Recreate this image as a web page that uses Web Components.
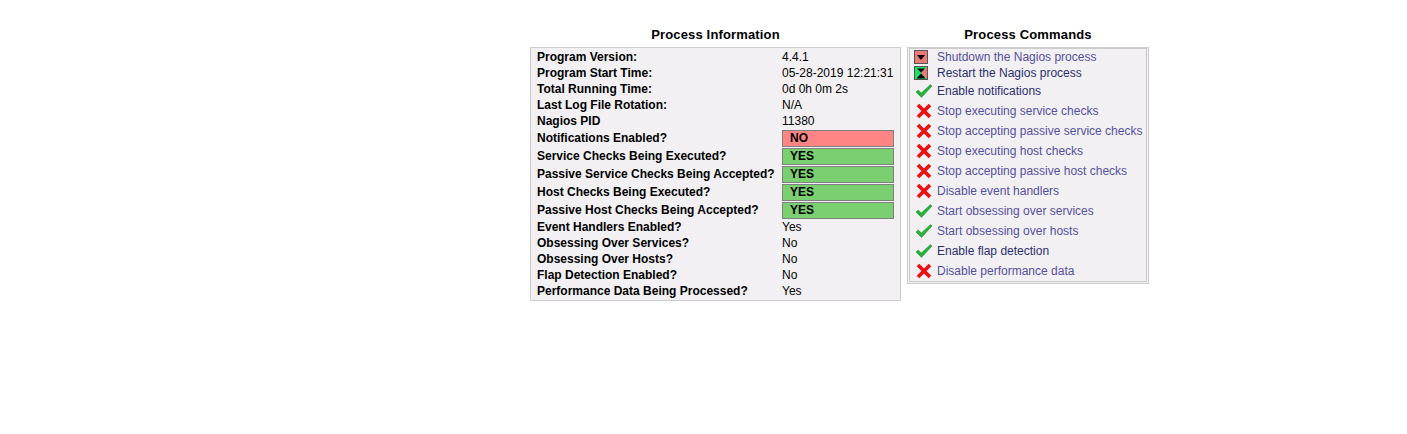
<!DOCTYPE html>
<html>
<head>
<meta charset="utf-8">
<style>
html, body { margin: 0; background: #fff; }
body { padding: 8px; font-family: "Liberation Sans", Arial, sans-serif; }
</style>
</head>
<body>
<process-page>
  <process-panel title="Process Information" style="--panel-w: 371px">
    <info-row label="Program Version:">4.4.1</info-row>
    <info-row label="Program Start Time:">05-28-2019 12:21:31</info-row>
    <info-row label="Total Running Time:">0d 0h 0m 2s</info-row>
    <info-row label="Last Log File Rotation:">N/A</info-row>
    <info-row label="Nagios PID">11380</info-row>
    <info-row label="Notifications Enabled?" state="no">NO</info-row>
    <info-row label="Service Checks Being Executed?" state="yes">YES</info-row>
    <info-row label="Passive Service Checks Being Accepted?" state="yes">YES</info-row>
    <info-row label="Host Checks Being Executed?" state="yes">YES</info-row>
    <info-row label="Passive Host Checks Being Accepted?" state="yes">YES</info-row>
    <info-row label="Event Handlers Enabled?">Yes</info-row>
    <info-row label="Obsessing Over Services?">No</info-row>
    <info-row label="Obsessing Over Hosts?">No</info-row>
    <info-row label="Flap Detection Enabled?">No</info-row>
    <info-row label="Performance Data Being Processed?">Yes</info-row>
  </process-panel>
  <process-panel title="Process Commands" double style="--panel-w: 242px">
    <command-row icon="stop" small visited>Shutdown the Nagios process</command-row>
    <command-row icon="restart" small>Restart the Nagios process</command-row>
    <command-row icon="check">Enable notifications</command-row>
    <command-row icon="cross" visited>Stop executing service checks</command-row>
    <command-row icon="cross" visited>Stop accepting passive service checks</command-row>
    <command-row icon="cross" visited>Stop executing host checks</command-row>
    <command-row icon="cross" visited>Stop accepting passive host checks</command-row>
    <command-row icon="cross" visited>Disable event handlers</command-row>
    <command-row icon="check" visited>Start obsessing over services</command-row>
    <command-row icon="check" visited>Start obsessing over hosts</command-row>
    <command-row icon="check">Enable flap detection</command-row>
    <command-row icon="cross" visited>Disable performance data</command-row>
  </process-panel>
</process-page>
<script>
class ProcessPage extends HTMLElement {
  constructor() {
    super();
    this.attachShadow({ mode: 'open' }).innerHTML = `
<style>
:host { display: flex; align-items: flex-start; gap: 6px; padding: 19px 0 0 522px; }
</style>
<slot></slot>`;
  }
}

class ProcessPanel extends HTMLElement {
  constructor() {
    super();
    const double = this.hasAttribute('double');
    this.attachShadow({ mode: 'open' }).innerHTML = `
<style>
:host { display: block; width: var(--panel-w); flex: none; }
h2 { margin: 0 0 4px; height: 16px; font: bold 13px/16px "Liberation Sans", Arial, sans-serif; letter-spacing: .15px; text-align: center; color: #000; }
.box { background: #f2f0f2; border: 1px solid #ccc; padding: 1px 0; }
.box.double { padding: 0; }
.inner { border: 1px solid #ccc; margin: 0 1px 1px; }
</style>
<h2>${this.getAttribute('title')}</h2>
<div class="box ${double ? 'double' : ''}">${double ? '<div class="inner"><slot></slot></div>' : '<slot></slot>'}</div>`;
  }
}

class InfoRow extends HTMLElement {
  constructor() {
    super();
    const state = this.getAttribute('state');
    this.attachShadow({ mode: 'open' }).innerHTML = `
<style>
:host { display: grid; grid-template-columns: 245px 1fr; height: 16px; padding-left: 6px; font: 12px/16px "Liberation Sans", Arial, sans-serif; color: #000; }
:host([state]) { height: 18px; line-height: 18px; }
.label { font-weight: bold; white-space: nowrap; }
.value { white-space: nowrap; }
.badge { box-sizing: border-box; height: 17px; width: 112px; margin-top: 1px; border: 1px solid #808080; padding-left: 7px; font-weight: bold; line-height: 15px; }
.yes { background: #7acf70; }
.no { background: #ff8585; }
</style>
<div class="label">${this.getAttribute('label')}</div>
<div class="value ${state ? 'badge ' + state : ''}"><slot></slot></div>`;
  }
}

const ICONS = {
  stop: `<svg width="14" height="14" viewBox="0 0 14 14"><rect x=".5" y=".5" width="13" height="13" fill="#e87b78" stroke="#555"/><path d="M3 5h8L7 10z" fill="#000"/></svg>`,
  restart: `<svg width="14" height="14" viewBox="0 0 14 14"><rect x=".5" y=".5" width="13" height="13" fill="#e87b78" stroke="#555"/><path d="M1 1h12L7 7 13 13H1z" fill="#1de06a"/><path d="M13 1v12L7 7z" fill="#e87b78"/><path d="M3 2.500h8L7 6.500z" fill="#000"/><path d="M2.500 12.500 7 7.500l4.500 5z" fill="#000"/></svg>`,
  check: `<svg width="18" height="16" viewBox="0 0 18 16"><path d="M1 9l2.300-2 3 3L15.500 1.500 17 3 6.500 14.500z" fill="#27b337" stroke="#178a25" stroke-width=".5"/></svg>`,
  cross: `<svg width="16" height="16" viewBox="0 0 16 16"><path d="M2 2l12 12M14 2L2 14" fill="none" stroke="#ee1111" stroke-width="3.700"/></svg>`,
};

class CommandRow extends HTMLElement {
  constructor() {
    super();
    this.attachShadow({ mode: 'open' }).innerHTML = `
<style>
:host { display: flex; align-items: center; height: 20px; padding-left: 4px; font: 12px/16px "Liberation Sans", Arial, sans-serif; white-space: nowrap; color: #2a2f6e; }
:host([small]) { height: 16px; }
:host([visited]) { color: #54519f; }
.icon { display: flex; align-items: center; justify-content: center; width: 20px; height: 16px; margin-right: 3px; }
:host([small]) .icon { justify-content: flex-start; }
</style>
<span class="icon">${ICONS[this.getAttribute('icon')]}</span><slot></slot>`;
  }
}

customElements.define('process-page', ProcessPage);
customElements.define('process-panel', ProcessPanel);
customElements.define('info-row', InfoRow);
customElements.define('command-row', CommandRow);
</script>
</body>
</html>
